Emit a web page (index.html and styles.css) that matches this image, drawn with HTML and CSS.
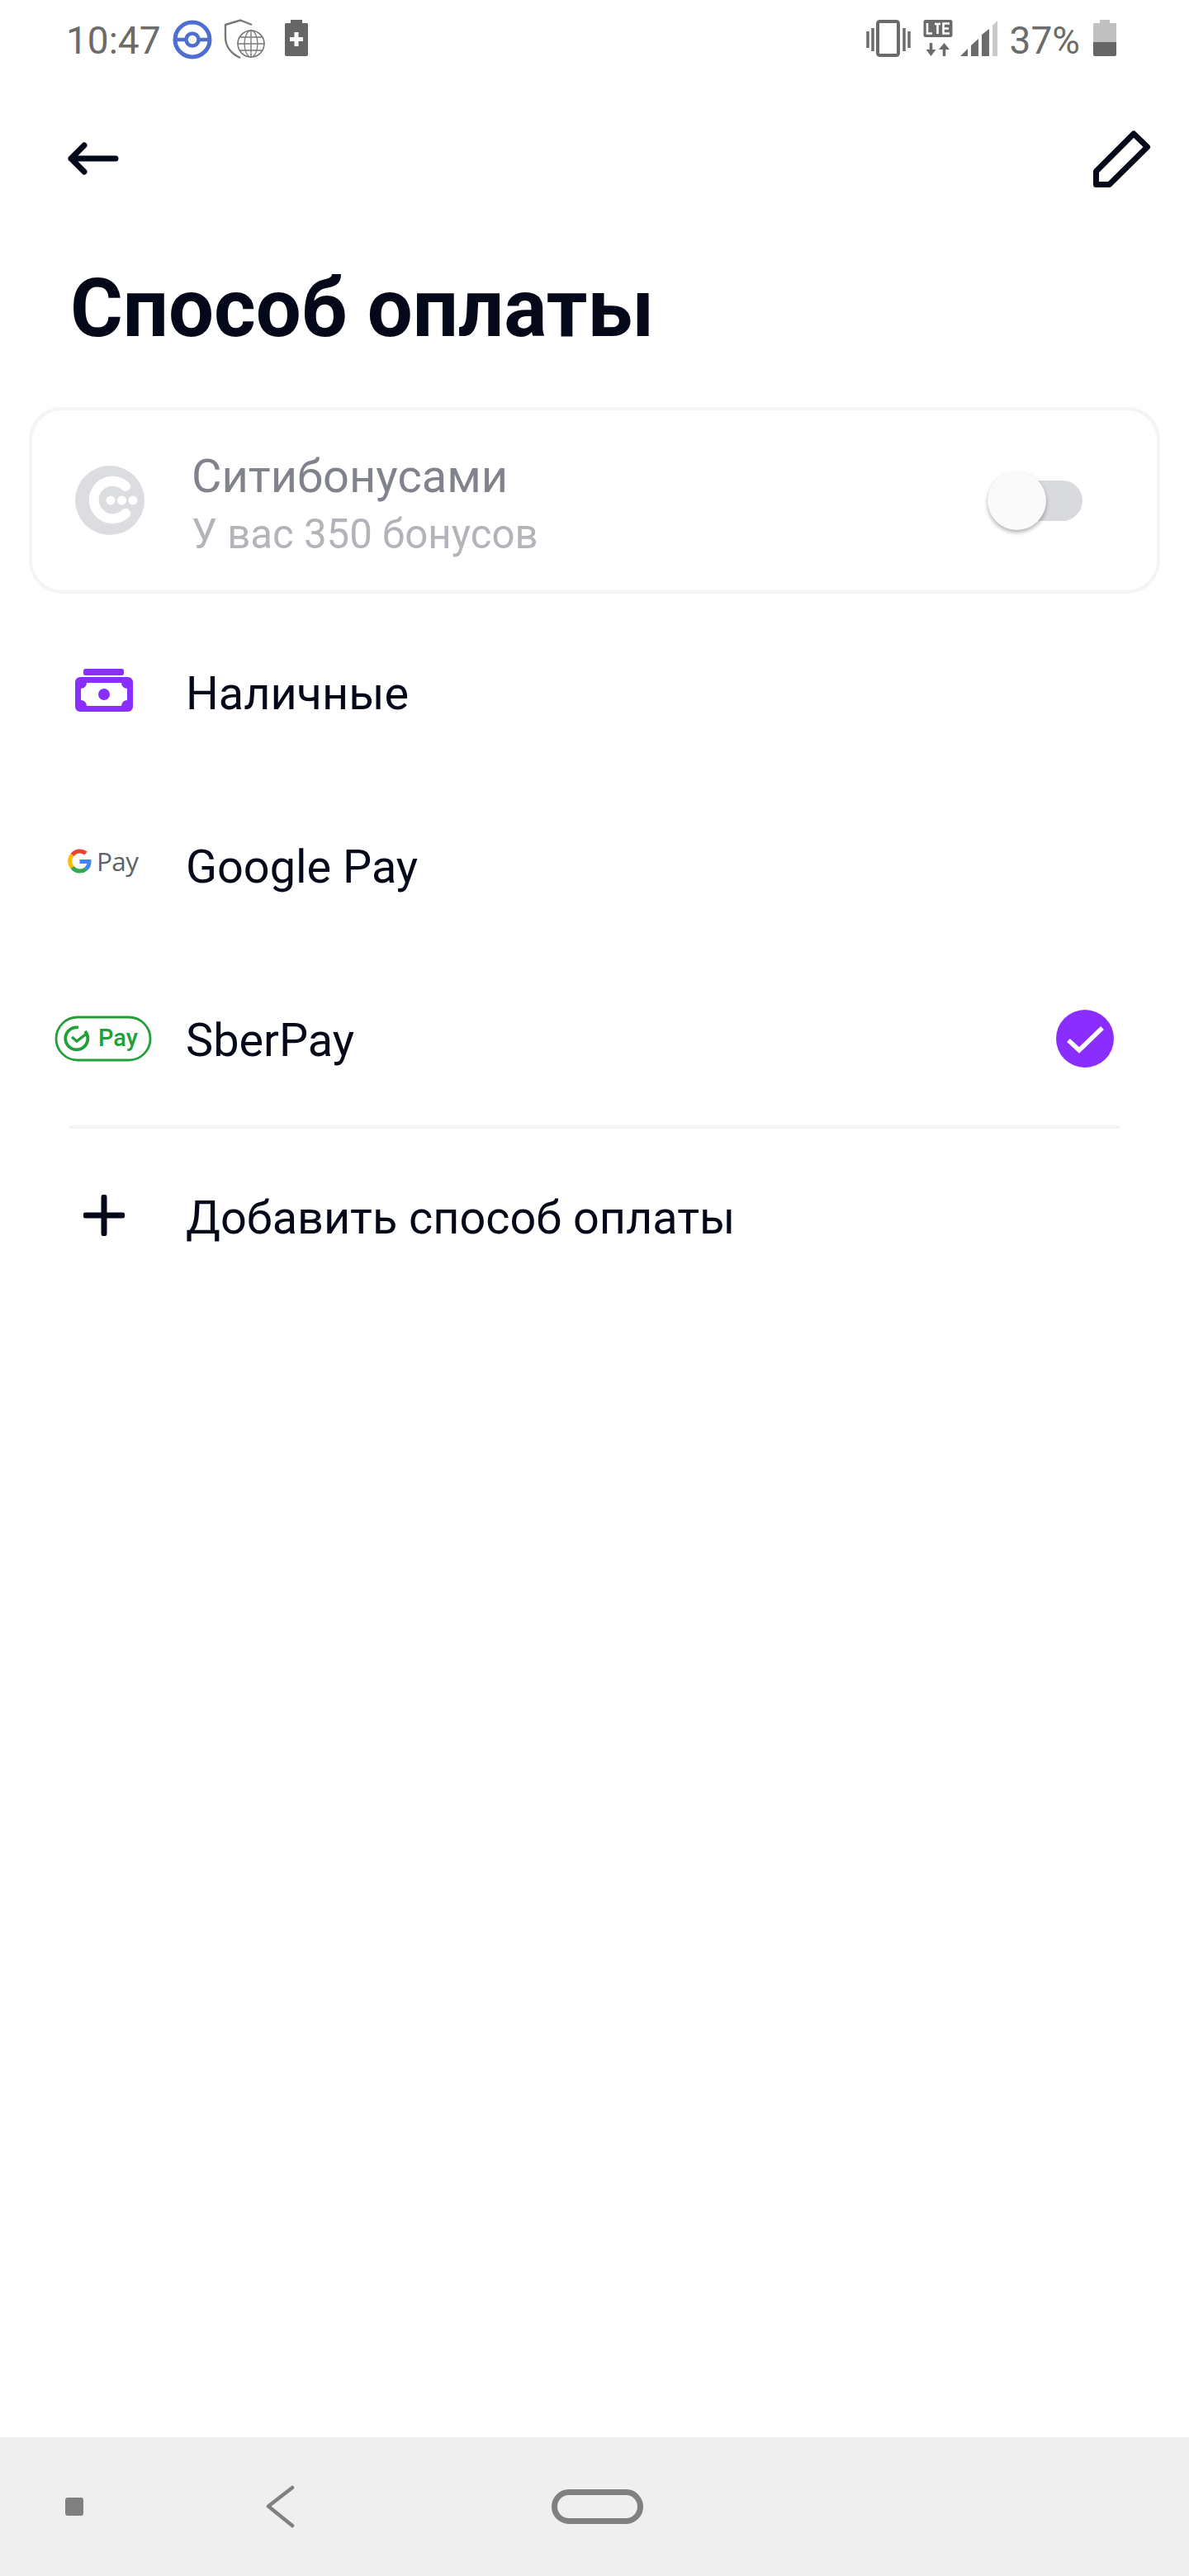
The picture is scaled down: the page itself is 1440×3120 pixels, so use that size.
FILE: index.html
```html
<!DOCTYPE html>
<html lang="ru">
<head>
<meta charset="utf-8">
<title>Способ оплаты</title>
<link rel="stylesheet" href="styles.css">
</head>
<body>
<div class="screen">
  <div class="status">
    <div class="status-group left">
      <span class="status-text time">10:47</span>
      <svg class="ic" width="50" height="50" viewBox="0 0 50 50"><circle cx="25" cy="25" r="21" fill="none" stroke="#4f6fd0" stroke-width="5"/><path d="M4 25H16M34 25H46" stroke="#4f6fd0" stroke-width="4.5"/><circle cx="25" cy="25" r="7.5" fill="none" stroke="#4f6fd0" stroke-width="4.5"/></svg>
      <svg class="ic shield" width="50" height="50" viewBox="0 0 50 50"><path d="M34 7 20 1.500 2 7V22C2 33 9 42 20 47" fill="none" stroke="#777" stroke-width="2.400"/><circle cx="33" cy="30" r="16" fill="#fff" stroke="#777" stroke-width="1.600"/><path d="M17 30H49M19.500 22H46.500M19.500 38H46.500M33 14V46" fill="none" stroke="#777" stroke-width="1.300"/><ellipse cx="33" cy="30" rx="8" ry="16" fill="none" stroke="#777" stroke-width="1.300"/></svg>
      <svg class="ic batt-plus" width="30" height="50" viewBox="0 0 30 50"><path d="M8 1H22V5H28A1.500 1.500 0 0 1 29 6.500V43A2 2 0 0 1 27 45H3A2 2 0 0 1 1 43V6.500A1.500 1.500 0 0 1 2.500 5H8Z" fill="#666"/><path d="M12.500 16H17.500V22H23V27H17.500V33H12.500V27H7V22H12.500Z" fill="#fff"/></svg>
    </div>
    <div class="status-group right">
      <svg class="ic" width="54" height="50" viewBox="0 0 54 50"><rect x="14" y="3" width="25" height="41" rx="2.500" fill="none" stroke="#6b6b6b" stroke-width="4"/><path d="M2 15V35M8 11V39M46 11V39M52 15V35" stroke="#6b6b6b" stroke-width="3.500"/></svg>
      <svg class="ic lte-ic" width="36" height="50" viewBox="0 0 36 50"><rect x="0.500" y="1" width="35" height="21" rx="2.500" fill="#6b6b6b"/><path d="M5 5V17.500H11M14 6H21M17.500 6V18M32 5.500H24.500V17.500H32M24.500 11.500H31" fill="none" stroke="#fff" stroke-width="2.600"/><path d="M9.500 29V38" stroke="#6b6b6b" stroke-width="3.500"/><path d="M3.500 37H15.500L9.500 45Z" fill="#6b6b6b"/><path d="M25.500 45V36" stroke="#6b6b6b" stroke-width="3.500"/><path d="M19 37H32L25.500 29Z" fill="#6b6b6b"/></svg>
      <svg class="ic" width="46" height="50" viewBox="0 0 46 50"><path d="M0 45 9 36V45Z M13 45V32L22 24V45Z M26 45V19L35 12V45Z" fill="#6b6b6b"/><path d="M39 45V8L45 2V45Z" fill="#c9c9c9"/></svg>
      <span class="status-text pct">37%</span>
      <svg class="ic" width="30" height="50" viewBox="0 0 30 50"><path d="M9 1H21V5H28A1.500 1.500 0 0 1 29 6.500V28H1V6.500A1.500 1.500 0 0 1 2.500 5H9Z" fill="#c0c0c0"/><path d="M1 28H29V43A2 2 0 0 1 27 45H3A2 2 0 0 1 1 43Z" fill="#666"/></svg>
    </div>
  </div>

  <div class="topbar">
    <svg width="70" height="70" viewBox="0 0 70 70"><path d="M6 35H60M22 19 6 35 22 51" fill="none" stroke="#040818" stroke-width="7" stroke-linecap="round" stroke-linejoin="round"/></svg>
    <svg width="70" height="70" viewBox="0 0 70 70"><path d="M49 5 65.500 21 19.500 66.500H3.500V50.500Z" fill="none" stroke="#040818" stroke-width="7" stroke-linejoin="round"/></svg>
  </div>

  <h1 class="title">Способ оплаты</h1>

  <div class="bonus-card">
    <svg class="bonus-logo" width="84" height="84" viewBox="0 0 84 84"><circle cx="42" cy="42" r="42" fill="#dcdde0"/><path d="M61 25A22.700 22.700 0 1 0 61 58" fill="none" stroke="#fff" stroke-width="12" stroke-linecap="round"/><circle cx="43" cy="42" r="5.500" fill="#fff"/><circle cx="56.500" cy="42" r="5.500" fill="#fff"/><circle cx="70" cy="42" r="5.500" fill="#fff"/></svg>
    <div class="bonus-text">
      <div class="bonus-name">Ситибонусами</div>
      <div class="bonus-sub">У вас 350 бонусов</div>
    </div>
    <div class="switch"><span class="switch-knob"></span></div>
  </div>

  <div class="rows">
    <div class="row">
      <span class="row-icon"><svg class="cash-ic" width="70" height="52" viewBox="0 0 70 52"><rect x="10" y="0" width="49" height="8" rx="2.500" fill="#8a2eff"/><path fill-rule="evenodd" d="M6 10H64A6 6 0 0 1 70 16V46A6 6 0 0 1 64 52H6A6 6 0 0 1 0 46V16A6 6 0 0 1 6 10ZM14 17A7 7 0 0 1 7 24V38A7 7 0 0 1 14 45H56A7 7 0 0 1 63 38V24A7 7 0 0 1 56 17Z" fill="#8a2eff"/><circle cx="35" cy="31" r="7" fill="#8a2eff"/></svg></span>
      <span class="row-label">Наличные</span>
    </div>
    <div class="row">
      <span class="row-icon"><svg class="gpay-ic" width="90" height="60" viewBox="0 -6.500 90 60"><g fill="none" stroke-width="5"><path d="M22 8A11.500 11.500 0 0 0 5.500 10" stroke="#ea4335"/><path d="M5.500 10A11.500 11.500 0 0 0 5.500 25" stroke="#fbbc04"/><path d="M5.500 25A11.500 11.500 0 0 0 22 27" stroke="#34a853"/><path d="M22 27A11.500 11.500 0 0 0 26 18H14.500" stroke="#4285f4"/></g><text class="gpay-text" x="35" y="29">Pay</text></svg></span>
      <span class="row-label">Google Pay</span>
    </div>
    <div class="row">
      <span class="row-icon"><svg class="sber-ic" width="118" height="56" viewBox="0 0 118 56"><rect x="2" y="2" width="114" height="52" rx="26" fill="none" stroke="#21a038" stroke-width="2.800"/><path d="M37 19A13.500 13.500 0 1 1 29 14.500" fill="none" stroke="#21a038" stroke-width="3.800"/><path d="M21 26 27 31 40 21" fill="none" stroke="#21a038" stroke-width="3.400"/><text class="sber-text" x="53" y="37">Pay</text></svg></span>
      <span class="row-label">SberPay</span>
      <svg class="row-check" width="70" height="70" viewBox="0 0 70 70"><circle cx="35" cy="35" r="35" fill="#8a2eff"/><path d="M15 37 28 49 56 22" fill="none" stroke="#fff" stroke-width="5.500"/></svg>
    </div>
  </div>

  <div class="divider"></div>

  <div class="row add-row">
    <span class="row-icon"><svg class="plus-ic" width="50" height="50" viewBox="0 0 50 50"><path d="M25 3V47M3 25H47" stroke="#040818" stroke-width="7" stroke-linecap="round"/></svg></span>
    <span class="row-label">Добавить способ оплаты</span>
  </div>

  <div class="spacer"></div>

  <div class="navbar">
    <span class="nav-square"></span>
    <svg class="nav-back" width="36" height="52" viewBox="0 0 36 52"><path d="M32 3 3 25.500 32 49" fill="none" stroke="#808080" stroke-width="4.500" stroke-linecap="round" stroke-linejoin="round"/></svg>
    <span class="nav-home"></span>
  </div>
</div>
</body>
</html>
```

FILE: styles.css
```css
* { box-sizing: border-box; }
html, body { margin: 0; padding: 0; background: #fff; }
body { font-family: Roboto, "Liberation Sans", sans-serif; color: #040818; }

.screen { width: 1440px; height: 3120px; display: flex; flex-direction: column; background: #fff; overflow: hidden; }

.status { height: 96px; padding: 23px 87px 0 80px; display: flex; justify-content: space-between; align-items: flex-start; }
.status-group { display: flex; align-items: flex-start; }
.status-text { font-size: 46px; line-height: 50px; color: #6b6b6b; }
.ic { display: block; }
.time { margin-right: 13px; margin-top: 1px; }
.shield { margin-left: 13px; }
.batt-plus { margin-left: 23px; }
.lte-ic { margin: 0 9px 0 15px; }
.pct { margin: 1px 15px 0 14px; }

.topbar { height: 70px; margin-top: 61px; padding: 0 46px 0 80px; display: flex; justify-content: space-between; align-items: center; }

.title { margin: 91px 0 0 85px; font-size: 97.5px; line-height: 112px; font-weight: 700; color: #040818; }

.bonus-card { margin: 63px 35px 0 35px; height: 226px; padding: 0 0 0 52px; border: 4px solid #f4f4f5; border-radius: 40px; display: flex; align-items: center; }
.bonus-logo { flex: none; }
.bonus-text { margin: 6px 0 0 57px; flex: 1; }
.bonus-name { font-size: 56px; line-height: 64px; color: #80828c; }
.bonus-sub { font-size: 49.2px; line-height: 54px; margin-top: 11px; color: #b3b4ba; }

.switch { position: relative; width: 96px; height: 49px; margin-right: 90px; background: #d9dade; border-radius: 25px; }
.switch-knob { position: absolute; left: -19px; top: -11px; width: 71px; height: 71px; border-radius: 50%; background: #fafafa; box-shadow: 0 3px 5px rgba(0, 0, 0, .3); }

.rows { margin: 16px 0 -2px; }
.row { height: 210px; display: flex; align-items: center; }
.row-icon { width: 225px; flex: none; display: flex; justify-content: center; padding-left: 27px; }
.row-label { font-size: 55.8px; line-height: 64px; color: #040818; }
.row-check { margin: 0 91px 4px auto; }
.cash-ic { margin-bottom: 8px; }
.gpay-ic { margin: 0 0 3px 2px; }
.sber-ic { margin: 0 3px 5px 0; }
.plus-ic { margin-bottom: 6px; }

.divider { height: 4px; margin: 0 84px; background: #f4f4f5; }
.add-row { height: 216px; }

.spacer { flex: 1; }

.gpay-text { font-family: "Open Sans", Roboto, sans-serif; font-size: 31.5px; letter-spacing: -0.6px; fill: #5f6368; }
.sber-text { font-family: Roboto, sans-serif; font-size: 29px; font-weight: 500; fill: #21a038; }

.navbar { height: 168px; background: #efefef; display: flex; align-items: center; padding-left: 79px; flex: none; }
.nav-square { width: 22px; height: 22px; background: #808080; border-radius: 3px; }
.nav-back { margin-left: 221px; }
.nav-home { width: 111px; height: 42px; margin-left: 310px; border: 7px solid #808080; border-radius: 21px; }
```
